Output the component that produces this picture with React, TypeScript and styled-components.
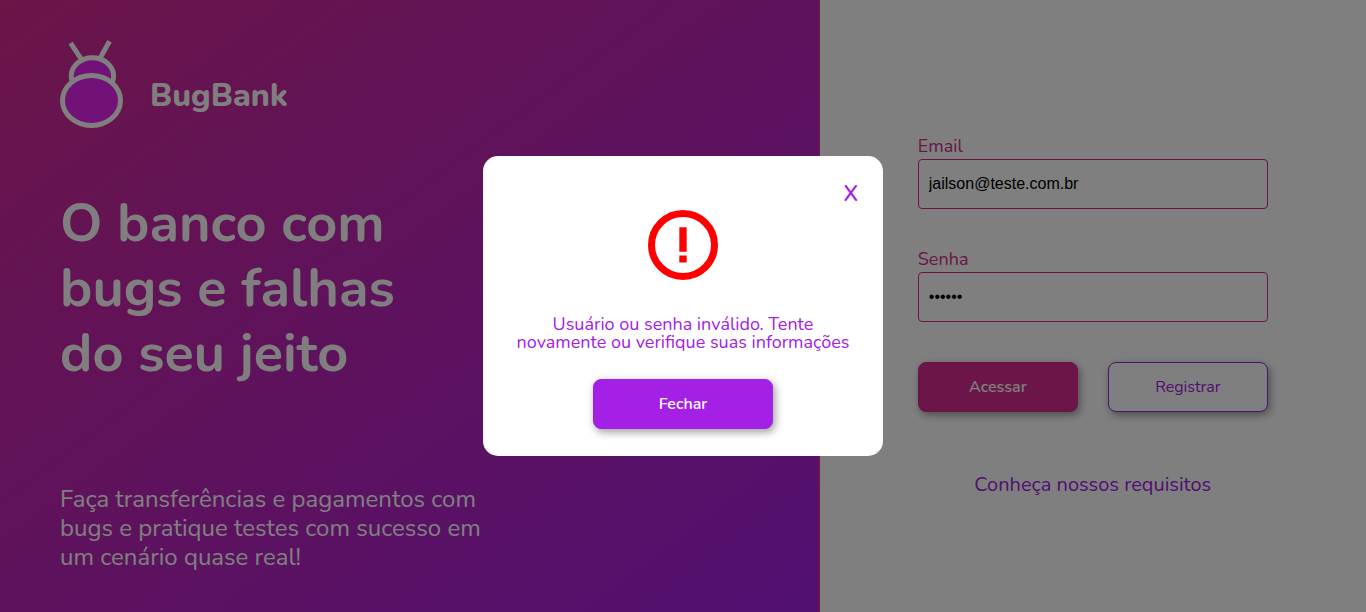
import styled, { createGlobalStyle, css } from "styled-components";

const pink = "#d62a92";
const purple = "#a420e4";

const GlobalStyle = createGlobalStyle`
  * { box-sizing: border-box; margin: 0; padding: 0; }
  body { background: #fff; overflow: hidden; }
  body, button { font-family: Nunito, "Noto Sans", sans-serif; }
`;

const Page = styled.div`
  display: flex;
  height: 100vh;
`;

const Hero = styled.section`
  display: flex;
  flex-direction: column;
  width: 60%;
  padding: 40px 60px;
  color: #fff;
  background: linear-gradient(to bottom right, ${pink}, ${purple});
  border-right: 2px solid ${pink};
`;

const Brand = styled.div`
  display: flex;
  align-items: flex-end;
  gap: 26px;
  height: 88px;
`;

const BrandName = styled.span`
  font-size: 32px;
  font-weight: 800;
  line-height: 32px;
  padding-bottom: 16px;
`;

const Title = styled.h1`
  width: 360px;
  margin-top: 63px;
  font-size: 54px;
  font-weight: 700;
  line-height: 65px;
`;

const Subtitle = styled.p`
  width: 440px;
  margin-top: auto;
  font-size: 24px;
  line-height: 29px;
`;

const Access = styled.main`
  display: flex;
  flex: 1;
  flex-direction: column;
  align-items: center;
  padding-top: 137px;
`;

const Form = styled.form`
  display: flex;
  flex-direction: column;
  gap: 41px;
  width: 350px;
`;

const Field = styled.label`
  display: flex;
  flex-direction: column;
  gap: 4px;
  color: ${pink};
  font-size: 18px;
  line-height: 18px;
`;

const Input = styled.input`
  height: 50px;
  padding: 0 10px;
  border: 1px solid ${pink};
  border-radius: 4px;
  background: #fff;
  color: #000;
  font: 16px "Liberation Sans", Arial, sans-serif;
  outline: none;
`;

const Actions = styled.div`
  display: flex;
  justify-content: space-between;
  margin-top: -1px;
`;

const Button = styled.button<{ $width: number; $color: string; $outlined?: boolean }>`
  width: ${(p) => p.$width}px;
  height: 50px;
  border: 1px solid ${(p) => p.$color};
  border-radius: 8px;
  box-shadow: 2px 3px 8px rgba(0, 0, 0, 0.4);
  font-size: 16px;
  ${(p) =>
    p.$outlined
      ? css`
          background: #fff;
          color: ${p.$color};
          font-weight: 400;
        `
      : css`
          background: ${p.$color};
          color: #fff;
          font-weight: 600;
        `}
`;

const Link = styled.a`
  margin-top: 63px;
  color: ${purple};
  font-size: 20px;
  line-height: 20px;
`;

const Overlay = styled.div`
  position: fixed;
  inset: 0;
  display: flex;
  align-items: center;
  justify-content: center;
  background: rgba(0, 0, 0, 0.5);
`;

const Dialog = styled.div`
  display: flex;
  flex-direction: column;
  align-items: center;
  width: 400px;
  height: 300px;
  padding: 27px 25px 27px;
  border-radius: 15px;
  background: #fff;
`;

const Close = styled.button`
  align-self: flex-end;
  height: 22px;
  border: 0;
  background: none;
  color: ${purple};
  font-size: 22px;
  font-weight: 600;
  line-height: 22px;
`;

const AlertIcon = styled.svg`
  width: 70px;
  height: 70px;
  margin-top: 5px;
`;

const Message = styled.p`
  width: 350px;
  margin: 35px 0 auto;
  color: ${purple};
  font-size: 18px;
  line-height: 18px;
  text-align: center;
`;

function BugLogo() {
  return (
    <svg width="64" height="88" viewBox="0 0 64 88" fill="#e424f0" stroke="#fff" strokeWidth="5">
      <path d="M10.6 3 21.4 19.4M49.5 1.3 40 18.4" fill="none" />
      <ellipse cx="32.4" cy="36" rx="21.2" ry="18.3" />
      <ellipse cx="31.5" cy="60.5" rx="29" ry="25" />
    </svg>
  );
}

export default function App() {
  return (
    <>
      <GlobalStyle />
      <Page>
        <Hero>
          <Brand>
            <BugLogo />
            <BrandName>BugBank</BrandName>
          </Brand>
          <Title>O banco com bugs e falhas do seu jeito</Title>
          <Subtitle>
            Faça transferências e pagamentos com bugs e pratique testes com sucesso em um cenário quase real!
          </Subtitle>
        </Hero>
        <Access>
          <Form>
            <Field>
              Email
              <Input type="text" defaultValue="jailson@teste.com.br" />
            </Field>
            <Field>
              Senha
              <Input type="password" defaultValue="123456" />
            </Field>
            <Actions>
              <Button type="button" $width={160} $color={pink}>Acessar</Button>
              <Button type="button" $width={160} $color={purple} $outlined>Registrar</Button>
            </Actions>
          </Form>
          <Link>Conheça nossos requisitos</Link>
        </Access>
      </Page>
      <Overlay>
        <Dialog role="dialog">
          <Close type="button">X</Close>
          <AlertIcon viewBox="0 0 20 20" fill="#f00">
            <circle cx="10" cy="10" r="9" fill="none" stroke="#f00" strokeWidth="2" />
            <path d="M8.95 4.95h2.1v7h-2.1zM8.95 13h2.1v2h-2.1z" />
          </AlertIcon>
          <Message>Usuário ou senha inválido. Tente novamente ou verifique suas informações</Message>
          <Button type="button" $width={180} $color={purple}>Fechar</Button>
        </Dialog>
      </Overlay>
    </>
  );
}
